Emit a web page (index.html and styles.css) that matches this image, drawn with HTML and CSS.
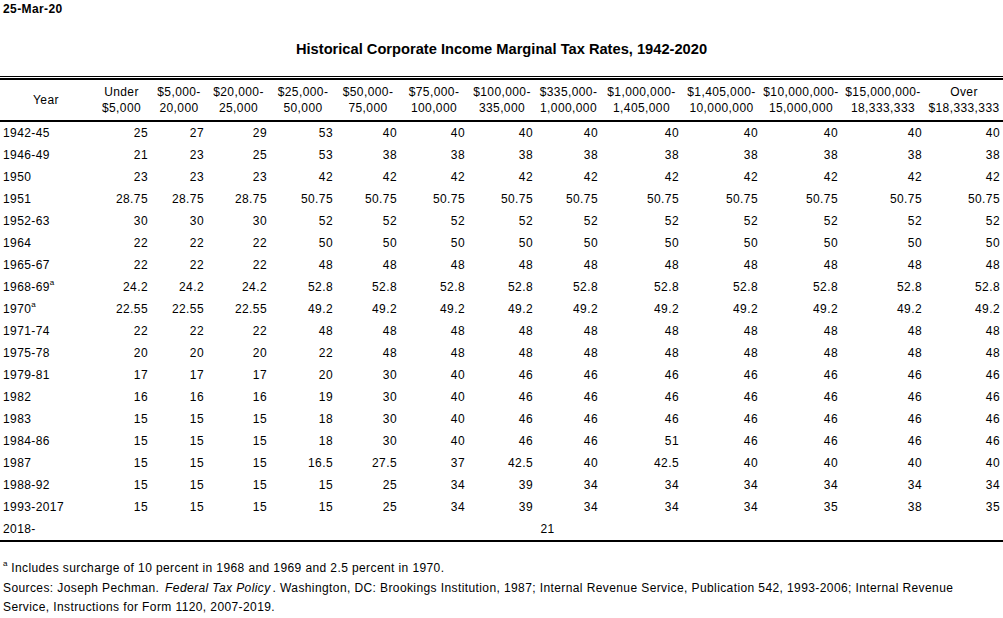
FILE: index.html
```html
<!DOCTYPE html>
<html lang="en">
<head>
<meta charset="utf-8">
<title>Historical Corporate Income Marginal Tax Rates, 1942-2020</title>
<link rel="stylesheet" href="styles.css">
</head>
<body>
<div class="page">
  <div class="date">25-Mar-20</div>
  <h1 class="title">Historical Corporate Income Marginal Tax Rates, 1942-2020</h1>
  <div class="rule-double"></div>
  <table class="rates">
    <colgroup>
      <col class="c0"><col class="c1"><col class="c2"><col class="c3"><col class="c4"><col class="c5"><col class="c6"><col class="c7"><col class="c8"><col class="c9"><col class="c10"><col class="c11"><col class="c12"><col class="c13">
    </colgroup>
    <thead>
      <tr>
        <th>Year</th>
        <th>Under<br>$5,000</th>
        <th>$5,000-<br>20,000</th>
        <th>$20,000-<br>25,000</th>
        <th>$25,000-<br>50,000</th>
        <th>$50,000-<br>75,000</th>
        <th>$75,000-<br>100,000</th>
        <th>$100,000-<br>335,000</th>
        <th>$335,000-<br>1,000,000</th>
        <th>$1,000,000-<br>1,405,000</th>
        <th>$1,405,000-<br>10,000,000</th>
        <th>$10,000,000-<br>15,000,000</th>
        <th>$15,000,000-<br>18,333,333</th>
        <th>Over<br>$18,333,333</th>
      </tr>
    </thead>
    <tbody>
      <tr><td class="yr">1942-45</td><td>25</td><td>27</td><td>29</td><td>53</td><td>40</td><td>40</td><td>40</td><td>40</td><td>40</td><td>40</td><td>40</td><td>40</td><td>40</td></tr>
      <tr><td class="yr">1946-49</td><td>21</td><td>23</td><td>25</td><td>53</td><td>38</td><td>38</td><td>38</td><td>38</td><td>38</td><td>38</td><td>38</td><td>38</td><td>38</td></tr>
      <tr><td class="yr">1950</td><td>23</td><td>23</td><td>23</td><td>42</td><td>42</td><td>42</td><td>42</td><td>42</td><td>42</td><td>42</td><td>42</td><td>42</td><td>42</td></tr>
      <tr><td class="yr">1951</td><td>28.75</td><td>28.75</td><td>28.75</td><td>50.75</td><td>50.75</td><td>50.75</td><td>50.75</td><td>50.75</td><td>50.75</td><td>50.75</td><td>50.75</td><td>50.75</td><td>50.75</td></tr>
      <tr><td class="yr">1952-63</td><td>30</td><td>30</td><td>30</td><td>52</td><td>52</td><td>52</td><td>52</td><td>52</td><td>52</td><td>52</td><td>52</td><td>52</td><td>52</td></tr>
      <tr><td class="yr">1964</td><td>22</td><td>22</td><td>22</td><td>50</td><td>50</td><td>50</td><td>50</td><td>50</td><td>50</td><td>50</td><td>50</td><td>50</td><td>50</td></tr>
      <tr><td class="yr">1965-67</td><td>22</td><td>22</td><td>22</td><td>48</td><td>48</td><td>48</td><td>48</td><td>48</td><td>48</td><td>48</td><td>48</td><td>48</td><td>48</td></tr>
      <tr><td class="yr">1968-69<sup class="note">a</sup></td><td>24.2</td><td>24.2</td><td>24.2</td><td>52.8</td><td>52.8</td><td>52.8</td><td>52.8</td><td>52.8</td><td>52.8</td><td>52.8</td><td>52.8</td><td>52.8</td><td>52.8</td></tr>
      <tr><td class="yr">1970<sup class="note">a</sup></td><td>22.55</td><td>22.55</td><td>22.55</td><td>49.2</td><td>49.2</td><td>49.2</td><td>49.2</td><td>49.2</td><td>49.2</td><td>49.2</td><td>49.2</td><td>49.2</td><td>49.2</td></tr>
      <tr><td class="yr">1971-74</td><td>22</td><td>22</td><td>22</td><td>48</td><td>48</td><td>48</td><td>48</td><td>48</td><td>48</td><td>48</td><td>48</td><td>48</td><td>48</td></tr>
      <tr><td class="yr">1975-78</td><td>20</td><td>20</td><td>20</td><td>22</td><td>48</td><td>48</td><td>48</td><td>48</td><td>48</td><td>48</td><td>48</td><td>48</td><td>48</td></tr>
      <tr><td class="yr">1979-81</td><td>17</td><td>17</td><td>17</td><td>20</td><td>30</td><td>40</td><td>46</td><td>46</td><td>46</td><td>46</td><td>46</td><td>46</td><td>46</td></tr>
      <tr><td class="yr">1982</td><td>16</td><td>16</td><td>16</td><td>19</td><td>30</td><td>40</td><td>46</td><td>46</td><td>46</td><td>46</td><td>46</td><td>46</td><td>46</td></tr>
      <tr><td class="yr">1983</td><td>15</td><td>15</td><td>15</td><td>18</td><td>30</td><td>40</td><td>46</td><td>46</td><td>46</td><td>46</td><td>46</td><td>46</td><td>46</td></tr>
      <tr><td class="yr">1984-86</td><td>15</td><td>15</td><td>15</td><td>18</td><td>30</td><td>40</td><td>46</td><td>46</td><td>51</td><td>46</td><td>46</td><td>46</td><td>46</td></tr>
      <tr><td class="yr">1987</td><td>15</td><td>15</td><td>15</td><td>16.5</td><td>27.5</td><td>37</td><td>42.5</td><td>40</td><td>42.5</td><td>40</td><td>40</td><td>40</td><td>40</td></tr>
      <tr><td class="yr">1988-92</td><td>15</td><td>15</td><td>15</td><td>15</td><td>25</td><td>34</td><td>39</td><td>34</td><td>34</td><td>34</td><td>34</td><td>34</td><td>34</td></tr>
      <tr><td class="yr">1993-2017</td><td>15</td><td>15</td><td>15</td><td>15</td><td>25</td><td>34</td><td>39</td><td>34</td><td>34</td><td>34</td><td>35</td><td>38</td><td>35</td></tr>
      <tr class="last"><td class="yr">2018-</td><td class="span" colspan="13">21</td></tr>
    </tbody>
  </table>
  <div class="notes">
    <p><sup class="note">a</sup> Includes surcharge of 10 percent in 1968 and 1969 and 2.5 percent in 1970.</p>
    <p>Sources: Joseph Pechman. <em>Federal Tax Policy</em>. Washington, DC: Brookings Institution, 1987; Internal Revenue Service, Publication 542, 1993-2006; Internal Revenue Service, Instructions for Form 1120, 2007-2019.</p>
  </div>
</div>
</body>
</html>
```
FILE: styles.css
```css
html, body {
  margin: 0;
  padding: 0;
  background: #fff;
}
body {
  font-family: "Liberation Sans", Arial, sans-serif;
  font-size: 12px;
  letter-spacing: 0.4px;
  color: #000;
}
.page {
  width: 1003px;
}
.date {
  font-weight: bold;
  line-height: 18px;
  padding-left: 3px;
}
.title {
  margin: 23px 0 0;
  font-size: 14.67px;
  letter-spacing: 0;
  line-height: 17px;
  font-weight: bold;
  text-align: center;
}
.rule-double {
  margin-top: 18px;
  height: 1px;
  border-top: 1px solid #000;
  border-bottom: 2px solid #000;
}
.rates {
  width: 1003px;
  table-layout: fixed;
  border-collapse: separate;
  border-spacing: 0;
}
.c0 { width: 92px; }
.c1 { width: 59px; }
.c2 { width: 56px; }
.c3 { width: 63px; }
.c4 { width: 66px; }
.c5 { width: 64px; }
.c6 { width: 68px; }
.c7 { width: 68px; }
.c8 { width: 65px; }
.c9 { width: 81px; }
.c10 { width: 79px; }
.c11 { width: 80px; }
.c12 { width: 84px; }
.c13 { width: 78px; }
.rates th {
  box-sizing: border-box;
  height: 42px;
  padding: 0;
  font-weight: normal;
  line-height: 16px;
  text-align: center;
  vertical-align: middle;
  white-space: nowrap;
  border-bottom: 2px solid #000;
}
.rates td {
  height: 22px;
  padding: 0 3px 0 0;
  line-height: 22px;
  text-align: right;
  white-space: nowrap;
  vertical-align: top;
}
.rates td.yr {
  text-align: left;
  padding: 0 0 0 3px;
}
.rates td.span {
  text-align: center;
  padding: 0;
}
.rates tr.last td {
  box-sizing: border-box;
  height: 24px;
  border-bottom: 2px solid #000;
}
.note {
  font-size: 8px;
  letter-spacing: 0;
  line-height: 0;
  vertical-align: 6px;
}
.notes {
  margin-top: 17px;
  padding: 0 24px 0 3px;
  line-height: 19.5px;
}
.notes p {
  margin: 0;
}
.notes em {
  font-style: italic;
  margin: 0 2px 0 2px;
}
```
